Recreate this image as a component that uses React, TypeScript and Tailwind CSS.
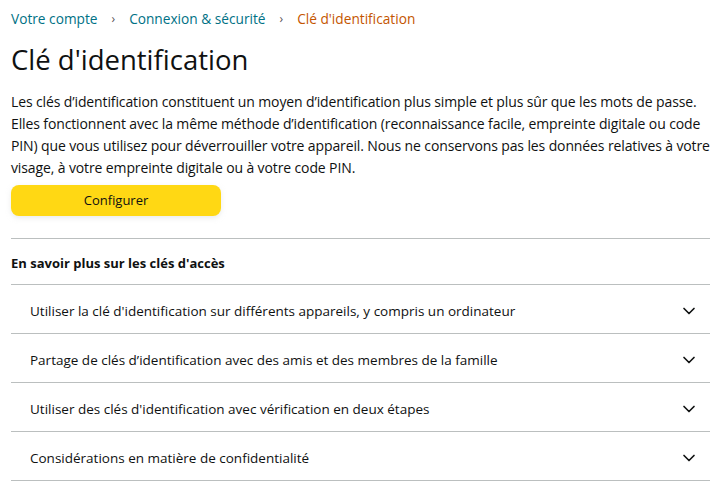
import { ChevronDown } from "lucide-react"

const items = [
  "Utiliser la clé d'identification sur différents appareils, y compris un ordinateur",
  "Partage de clés d’identification avec des amis et des membres de la famille",
  "Utiliser des clés d'identification avec vérification en deux étapes",
  "Considérations en matière de confidentialité",
]

export default function App() {
  return (
    <div className="min-h-screen bg-white pl-[11px] pr-3 pt-[9px] text-[#0f1111] font-['Open_Sans','Liberation_Sans',sans-serif]">
      <nav className="flex items-center gap-[14px] text-[13.7px] leading-5">
        <span className="text-[#007185]">Votre compte</span>
        <span className="text-[#555] text-[12px]">›</span>
        <span className="text-[#007185]">Connexion &amp; sécurité</span>
        <span className="text-[#555] text-[12px]">›</span>
        <span className="text-[#c45500]">Clé d'identification</span>
      </nav>

      <h1 className="mt-[13px] text-[27.5px] leading-9 font-normal">Clé d'identification</h1>

      <p className="mt-[13px] whitespace-nowrap text-[14px] leading-[22px] tracking-[-0.12px]">
        Les clés d’identification constituent un moyen d’identification plus simple et plus sûr que les mots de passe.
        <br />
        Elles fonctionnent avec la même méthode d’identification (reconnaissance facile, empreinte digitale ou code
        <br />
        PIN) que vous utilisez pour déverrouiller votre appareil. Nous ne conservons pas les données relatives à votre
        <br />
        visage, à votre empreinte digitale ou à votre code PIN.
      </p>

      <button className="mt-[6px] flex h-[31px] w-[210px] items-center justify-center rounded-lg bg-[#ffd814] text-[13px] shadow-[0_2px_5px_rgba(213,217,217,0.5)]">
        Configurer
      </button>

      <div className="mt-[22px] w-[699px] border-t border-[#bbbfbf]" />

      <h2 className="pt-[16px] pb-[13px] text-[13px] font-bold leading-4">En savoir plus sur les clés d'accès</h2>

      <ul className="w-[699px] border-t border-[#bbbfbf]">
        {items.map((t) => (
          <li key={t} className="flex h-[49px] items-center justify-between border-b border-[#bbbfbf] pl-[19px] pr-[11px] text-[13.5px]">
            <span className="pt-[4px]">{t}</span>
            <ChevronDown className="mt-[3px] h-5 w-5 text-[#0f1111]" strokeWidth={2} />
          </li>
        ))}
      </ul>
    </div>
  )
}
